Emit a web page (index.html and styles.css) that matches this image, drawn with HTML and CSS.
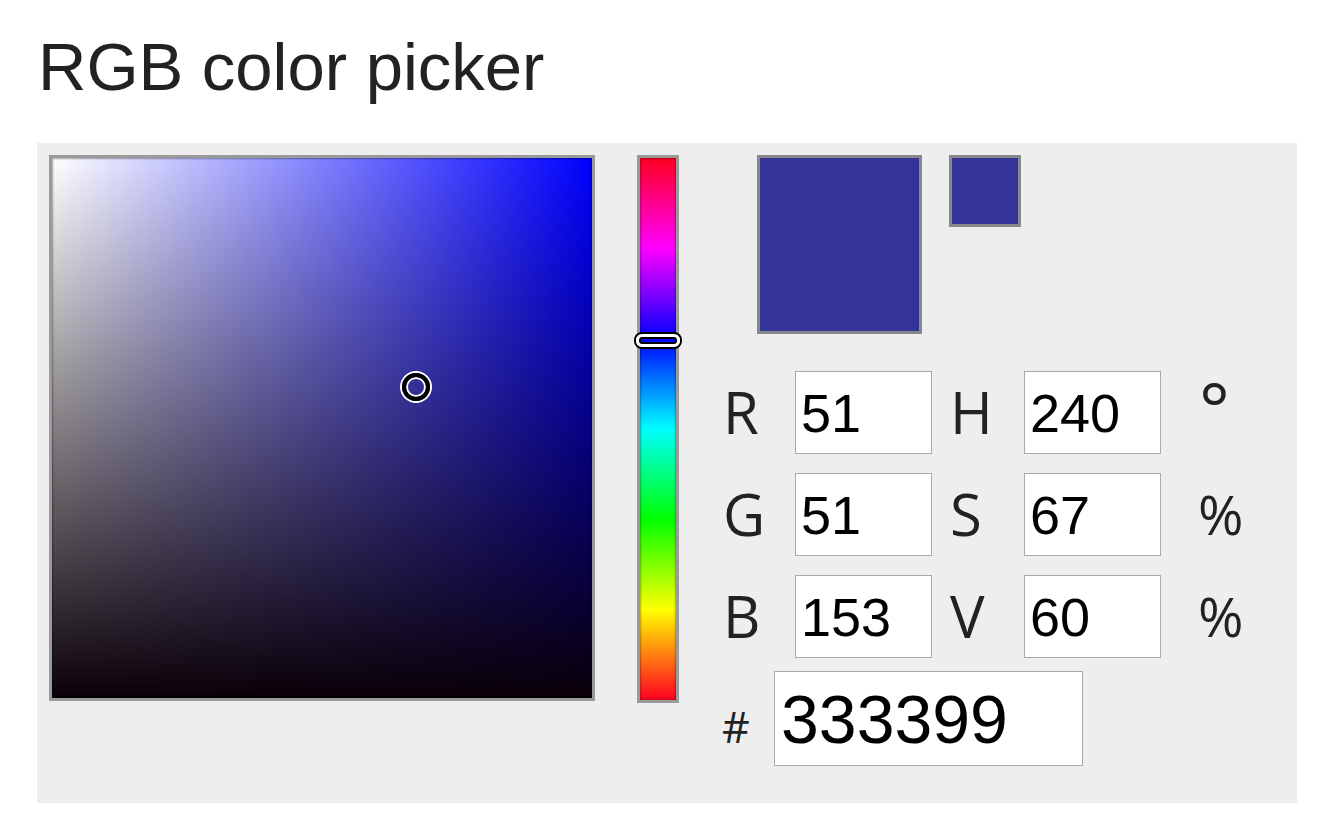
FILE: index.html
```html
<!DOCTYPE html>
<html>
<head>
<meta charset="utf-8">
<title>RGB color picker</title>
<link rel="stylesheet" href="styles.css">
</head>
<body>
<h1 class="title">RGB color picker</h1>
<div class="panel">
  <div class="sv">
    <div class="sv-marker" style="left:364px;top:229px"></div>
  </div>
  <div class="hue">
    <div class="hue-marker" style="top:182px"></div>
  </div>
  <div class="side">
    <div class="swatches">
      <div class="swatch swatch-big"></div>
      <div class="swatch swatch-small"></div>
    </div>
    <div class="fields">
      <span class="lbl">R</span><input class="num" type="text" value="51"><span class="lbl lbl2">H</span><input class="num" type="text" value="240"><span class="unit deg">°</span>
      <span class="lbl">G</span><input class="num" type="text" value="51"><span class="lbl lbl2">S</span><input class="num" type="text" value="67"><span class="unit">%</span>
      <span class="lbl">B</span><input class="num" type="text" value="153"><span class="lbl lbl2">V</span><input class="num" type="text" value="60"><span class="unit">%</span>
    </div>
    <div class="hexrow">
      <span class="hash">#</span><input class="hex" type="text" value="333399">
    </div>
  </div>
</div>
</body>
</html>
```

FILE: styles.css
```css
html, body {
  margin: 0;
  padding: 0;
  background: #ffffff;
}

.title {
  margin: 0 0 36px 0;
  padding: 27px 0 0 38px;
  height: 80px;
  font-family: "Liberation Sans", Arial, sans-serif;
  font-weight: normal;
  font-size: 67px;
  line-height: 80px;
  color: #222222;
}

.panel {
  margin-left: 37px;
  width: 1260px;
  height: 660px;
  box-sizing: border-box;
  padding: 12px;
  background: #eeeeee;
  display: flex;
  align-items: flex-start;
}

.sv {
  position: relative;
  flex: none;
  width: 546px;
  height: 546px;
  box-sizing: border-box;
  border: 3px solid #9a9a9a;
  background:
    linear-gradient(to top, #0a0008 0%, rgba(0,0,0,0) 100%),
    linear-gradient(to right, #ffffff 0%, #0000ff 100%);
  box-shadow: inset 0 0 2px 1px rgba(0,0,0,0.35);
  overflow: hidden;
}

.sv-marker {
  position: absolute;
  width: 28px;
  height: 28px;
  margin: -14px 0 0 -14px;
  box-sizing: border-box;
  border: 4px solid #000;
  border-radius: 50%;
  box-shadow: 0 0 0 2px #fff, inset 0 0 0 2px #fff;
}

.hue {
  position: relative;
  flex: none;
  margin-left: 42px;
  width: 42px;
  height: 548px;
  box-sizing: border-box;
  border: 3px solid #9a9a9a;
  background: linear-gradient(to bottom,
    #ff0022 0%,
    #ff00ff 16.67%,
    #0000ff 33.33%,
    #00ffff 50%,
    #00ff00 66.67%,
    #ffff00 83.33%,
    #ff0022 100%);
  box-shadow: inset 0 0 2px 1px rgba(0,0,0,0.3);
}

.hue-marker {
  position: absolute;
  left: -4px;
  width: 44px;
  height: 13px;
  margin-top: -6px;
  box-sizing: border-box;
  border: 3px solid #fff;
  border-radius: 6px;
  box-shadow: 0 0 0 2px #000, inset 0 0 0 2px #000;
}

.side {
  flex: none;
  margin-left: 36px;
  display: flex;
  flex-direction: column;
}

.swatches {
  display: flex;
  align-items: flex-start;
}

.swatch {
  box-sizing: border-box;
  border: 3px solid #888888;
  background: #333399;
}

.swatch-big {
  margin-left: 42px;
  width: 165px;
  height: 179px;
}

.swatch-small {
  margin-left: 27px;
  width: 72px;
  height: 72px;
}

.fields {
  margin-top: 37px;
  display: grid;
  grid-template-columns: 80px 137px 92px 137px auto;
  grid-auto-rows: 83px;
  row-gap: 19px;
  align-items: stretch;
}

.lbl, .unit, .hash {
  font-family: "Open Sans", "Noto Sans", sans-serif;
  color: #222222;
}

.lbl {
  font-size: 58px;
  line-height: 82px;
  padding-left: 8px;
}

.lbl2 {
  padding-left: 18px;
}

.unit {
  font-size: 55px;
  line-height: 82px;
  padding-left: 37px;
}

.unit.deg {
  font-size: 72px;
  line-height: 72px;
  padding-left: 38px;
}

.num, .hex {
  margin: 0;
  box-sizing: border-box;
  border: 1px solid #aaaaaa;
  background: #ffffff;
  color: #000000;
  font-family: "Liberation Sans", Arial, sans-serif;
  outline: none;
  border-radius: 0;
}

.num {
  width: 137px;
  height: 83px;
  padding: 0 0 0 5px;
  font-size: 54px;
}

.hexrow {
  margin-top: 13px;
  display: flex;
  align-items: flex-start;
}

.hash {
  width: 52px;
  padding-left: 7px;
  font-size: 43px;
  line-height: 50px;
  padding-top: 31px;
}

.hex {
  width: 309px;
  height: 95px;
  padding: 0 0 0 6px;
  font-size: 68px;
}
```
